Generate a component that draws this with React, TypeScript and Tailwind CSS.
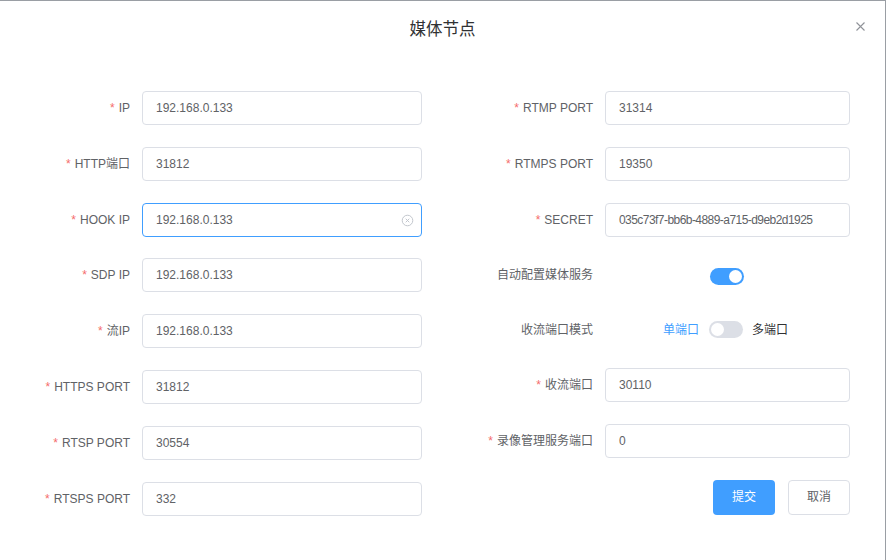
import React from 'react';

const font = { fontFamily: '"Liberation Sans", "Noto Sans CJK SC", Arial, sans-serif' };

type Field = { label: string; value: string; required?: boolean; focused?: boolean };

const leftFields: Field[] = [
  { label: 'IP', value: '192.168.0.133', required: true },
  { label: 'HTTP端口', value: '31812', required: true },
  { label: 'HOOK IP', value: '192.168.0.133', required: true, focused: true },
  { label: 'SDP IP', value: '192.168.0.133', required: true },
  { label: '流IP', value: '192.168.0.133', required: true },
  { label: 'HTTPS PORT', value: '31812', required: true },
  { label: 'RTSP PORT', value: '30554', required: true },
  { label: 'RTSPS PORT', value: '332', required: true },
];

const Label: React.FC<{ text: string; required?: boolean; width: string }> = ({ text, required, width }) => (
  <div className={`${width} shrink-0 pr-[12px] text-right text-[12px] text-[#606266]`}>
    {required && <span className="mr-[4px] text-[#f56c6c]">*</span>}
    {text}
  </div>
);

const Input: React.FC<{ value: string; focused?: boolean; width: string; tight?: boolean }> = ({
  value,
  focused,
  width,
  tight,
}) => (
  <div
    className={`${width} relative flex h-[34px] items-center overflow-hidden rounded-[4px] border bg-white px-[13px] text-[12px] text-[#606266] ${
      focused ? 'border-[#409eff]' : 'border-[#dcdfe6]'
    }`}
  >
    <span className={`whitespace-nowrap ${tight ? 'tracking-[-0.55px]' : ''}`}>{value}</span>
    {focused && (
      <svg className="absolute right-[7px] top-[10px]" width="13" height="13" viewBox="0 0 16 16" fill="none">
        <circle cx="8" cy="8" r="6.5" stroke="#c0c4cc" strokeWidth="1.2" />
        <path d="M5.8 5.8l4.4 4.4M10.2 5.8l-4.4 4.4" stroke="#c0c4cc" strokeWidth="1.2" />
      </svg>
    )}
  </div>
);

const Switch: React.FC<{ on: boolean }> = ({ on }) => (
  <div
    className={`relative h-[17px] w-[34px] shrink-0 rounded-full ${on ? 'bg-[#409eff]' : 'bg-[#dcdfe6]'}`}
  >
    <div
      className={`absolute top-[2px] h-[13px] w-[13px] rounded-full bg-white ${on ? 'right-[2px]' : 'left-[2px]'}`}
    />
  </div>
);

export default function App() {
  return (
    <div className="h-[560px] w-[886px] overflow-hidden bg-[#9a9ea4] pt-[1px]" style={font}>
      <div className="h-[559px] w-[885px] bg-white">
        {/* Header */}
        <div className="relative flex h-[58px] items-center justify-center pb-[1px]">
          <span className="text-[16.5px] text-[#303133]">媒体节点</span>
          <svg className="absolute left-[856px] top-[21px]" width="9" height="9" viewBox="0 0 9 9">
            <path d="M0.5 0.5l8 8M8.5 0.5l-8 8" stroke="#909399" strokeWidth="1.1" />
          </svg>
        </div>

        <div className="flex pl-[20px] pt-[32px]">
          {/* Left column */}
          <div className="flex flex-col gap-y-[21.8px]">
            {leftFields.map((f) => (
              <div key={f.label} className="flex items-center">
                <Label text={f.label} required={f.required} width="w-[122px]" />
                <Input value={f.value} focused={f.focused} width="w-[280px]" />
              </div>
            ))}
          </div>

          {/* Right column */}
          <div className="ml-[41px] flex flex-col gap-y-[21.8px]">
            <div className="flex items-center">
              <Label text="RTMP PORT" required width="w-[142px]" />
              <Input value="31314" width="w-[245px]" />
            </div>
            <div className="flex items-center">
              <Label text="RTMPS PORT" required width="w-[142px]" />
              <Input value="19350" width="w-[245px]" />
            </div>
            <div className="flex items-center">
              <Label text="SECRET" required width="w-[142px]" />
              <Input value="035c73f7-bb6b-4889-a715-d9eb2d1925" width="w-[245px]" tight />
            </div>
            <div className="flex h-[33px] items-center">
              <Label text="自动配置媒体服务" width="w-[142px]" />
              <div className="ml-[105px] mt-[3px]">
                <Switch on />
              </div>
            </div>
            <div className="flex h-[33px] items-center">
              <Label text="收流端口模式" width="w-[142px]" />
              <div className="ml-[58px] flex items-center text-[12px]">
                <span className="text-[#409eff]">单端口</span>
                <div className="ml-[10px]">
                  <Switch on={false} />
                </div>
                <span className="ml-[9px] text-[#303133]">多端口</span>
              </div>
            </div>
            <div className="flex items-center">
              <Label text="收流端口" required width="w-[142px]" />
              <Input value="30110" width="w-[245px]" />
            </div>
            <div className="flex items-center">
              <Label text="录像管理服务端口" required width="w-[142px]" />
              <Input value="0" width="w-[245px]" />
            </div>
            <div className="flex justify-end gap-[13px]">
              <button className="h-[35px] w-[62px] rounded-[4px] bg-[#409eff] text-[12px] text-white">提交</button>
              <button className="h-[35px] w-[62px] rounded-[4px] border border-[#dcdfe6] bg-white text-[12px] text-[#606266]">
                取消
              </button>
            </div>
          </div>
        </div>
      </div>
    </div>
  );
}
